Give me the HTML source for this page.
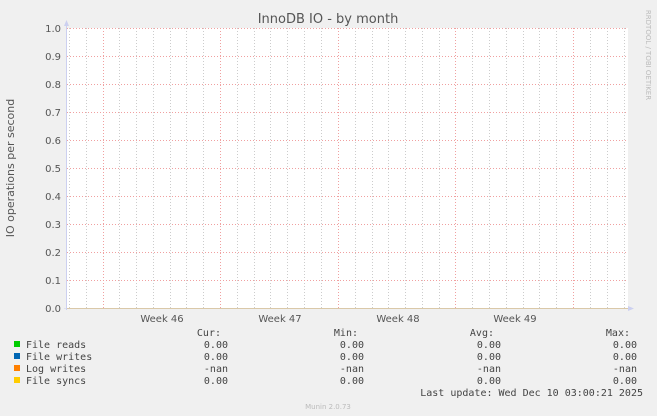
<!DOCTYPE html>
<html><head><style>
body{margin:0;background:#f0f0f0;}
svg{display:block}
text{font-family:"DejaVu Sans","Liberation Sans",sans-serif;fill:#555;}
.m{font-family:"DejaVu Sans Mono","Liberation Mono",monospace;font-size:10px;fill:#444;}
</style></head><body>
<svg width="657" height="416" xmlns="http://www.w3.org/2000/svg">
<rect width="657" height="416" fill="#f0f0f0"/>
<rect x="67" y="28" width="561" height="280" fill="#fff"/>
<g stroke="#ccc" stroke-width="1" stroke-dasharray="1,2">
<line x1="69.5" y1="28" x2="69.5" y2="308"/><line x1="86.5" y1="28" x2="86.5" y2="308"/>
<line x1="119.5" y1="28" x2="119.5" y2="308"/><line x1="136.5" y1="28" x2="136.5" y2="308"/><line x1="153.5" y1="28" x2="153.5" y2="308"/><line x1="170.5" y1="28" x2="170.5" y2="308"/><line x1="186.5" y1="28" x2="186.5" y2="308"/><line x1="203.5" y1="28" x2="203.5" y2="308"/>
<line x1="237.5" y1="28" x2="237.5" y2="308"/><line x1="254.5" y1="28" x2="254.5" y2="308"/><line x1="270.5" y1="28" x2="270.5" y2="308"/><line x1="287.5" y1="28" x2="287.5" y2="308"/><line x1="304.5" y1="28" x2="304.5" y2="308"/><line x1="321.5" y1="28" x2="321.5" y2="308"/>
<line x1="355.5" y1="28" x2="355.5" y2="308"/><line x1="372.5" y1="28" x2="372.5" y2="308"/><line x1="388.5" y1="28" x2="388.5" y2="308"/><line x1="405.5" y1="28" x2="405.5" y2="308"/><line x1="422.5" y1="28" x2="422.5" y2="308"/><line x1="439.5" y1="28" x2="439.5" y2="308"/>
<line x1="472.5" y1="28" x2="472.5" y2="308"/><line x1="489.5" y1="28" x2="489.5" y2="308"/><line x1="506.5" y1="28" x2="506.5" y2="308"/><line x1="523.5" y1="28" x2="523.5" y2="308"/><line x1="539.5" y1="28" x2="539.5" y2="308"/><line x1="556.5" y1="28" x2="556.5" y2="308"/>
<line x1="590.5" y1="28" x2="590.5" y2="308"/><line x1="607.5" y1="28" x2="607.5" y2="308"/><line x1="624.5" y1="28" x2="624.5" y2="308"/>
</g>
<g stroke="#f0a0a0" stroke-width="1" stroke-dasharray="1,2">
<line x1="220.5" y1="28" x2="220.5" y2="308"/><line x1="338.5" y1="28" x2="338.5" y2="308"/><line x1="455.5" y1="28" x2="455.5" y2="308"/><line x1="573.5" y1="28" x2="573.5" y2="308"/><line x1="103.5" y1="28" x2="103.5" y2="308"/>
<line x1="67" y1="28.5" x2="628" y2="28.5"/><line x1="67" y1="56.5" x2="628" y2="56.5"/><line x1="67" y1="84.5" x2="628" y2="84.5"/><line x1="67" y1="112.5" x2="628" y2="112.5"/><line x1="67" y1="140.5" x2="628" y2="140.5"/><line x1="67" y1="168.5" x2="628" y2="168.5"/><line x1="67" y1="196.5" x2="628" y2="196.5"/><line x1="67" y1="224.5" x2="628" y2="224.5"/><line x1="67" y1="252.5" x2="628" y2="252.5"/><line x1="67" y1="280.5" x2="628" y2="280.5"/>
</g>
<line x1="67" y1="308.5" x2="628" y2="308.5" stroke="#e8c060"/>
<line x1="66.5" y1="24" x2="66.5" y2="310" stroke="#ccd0f0"/>
<line x1="64" y1="308.5" x2="632" y2="308.5" stroke="#ccd0f0" stroke-opacity="0.5"/>
<polygon points="64,26 69,26 66.5,20" fill="#ccd0f0"/>
<polygon points="628,306 628,311 634,308.5" fill="#ccd0f0"/>
<text x="328" y="23" font-size="13" text-anchor="middle">InnoDB IO - by month</text>
<g font-size="10" text-anchor="end">
<text x="61" y="32">1.0</text><text x="61" y="60">0.9</text><text x="61" y="88">0.8</text><text x="61" y="116">0.7</text><text x="61" y="144">0.6</text><text x="61" y="172">0.5</text><text x="61" y="200">0.4</text><text x="61" y="228">0.3</text><text x="61" y="256">0.2</text><text x="61" y="284">0.1</text><text x="61" y="312">0.0</text>
</g>
<g font-size="10" text-anchor="middle">
<text x="162" y="322">Week 46</text><text x="280" y="322">Week 47</text><text x="398" y="322">Week 48</text><text x="515" y="322">Week 49</text>
</g>
<text transform="translate(14,168) rotate(-90)" font-size="11" text-anchor="middle">IO operations per second</text>
<text transform="translate(646,55) rotate(90)" font-size="7" style="fill:#bbb" text-anchor="middle">RRDTOOL / TOBI OETIKER</text>
<rect x="14" y="341" width="6" height="6" fill="#00cc00"/>
<rect x="14" y="353" width="6" height="6" fill="#0066b3"/>
<rect x="14" y="365" width="6" height="6" fill="#ff8000"/>
<rect x="14" y="377" width="6" height="6" fill="#ffcc00"/>
<text class="m" x="26" y="348">File reads</text>
<text class="m" x="26" y="360">File writes</text>
<text class="m" x="26" y="372">Log writes</text>
<text class="m" x="26" y="384">File syncs</text>
<g class="m" text-anchor="end">
<text class="m" x="221" y="336">Cur:</text><text class="m" x="358" y="336">Min:</text><text class="m" x="494" y="336">Avg:</text><text class="m" x="630" y="336">Max:</text>
<text class="m" x="228" y="348">0.00</text><text class="m" x="364" y="348">0.00</text><text class="m" x="501" y="348">0.00</text><text class="m" x="637" y="348">0.00</text>
<text class="m" x="228" y="360">0.00</text><text class="m" x="364" y="360">0.00</text><text class="m" x="501" y="360">0.00</text><text class="m" x="637" y="360">0.00</text>
<text class="m" x="228" y="372">-nan</text><text class="m" x="364" y="372">-nan</text><text class="m" x="501" y="372">-nan</text><text class="m" x="637" y="372">-nan</text>
<text class="m" x="228" y="384">0.00</text><text class="m" x="364" y="384">0.00</text><text class="m" x="501" y="384">0.00</text><text class="m" x="637" y="384">0.00</text>
<text class="m" x="643" y="396">Last update: Wed Dec 10 03:00:21 2025</text>
</g>
<text x="328" y="409" font-size="7" text-anchor="middle" style="fill:#bbb">Munin 2.0.73</text>
</svg>
</body></html>
